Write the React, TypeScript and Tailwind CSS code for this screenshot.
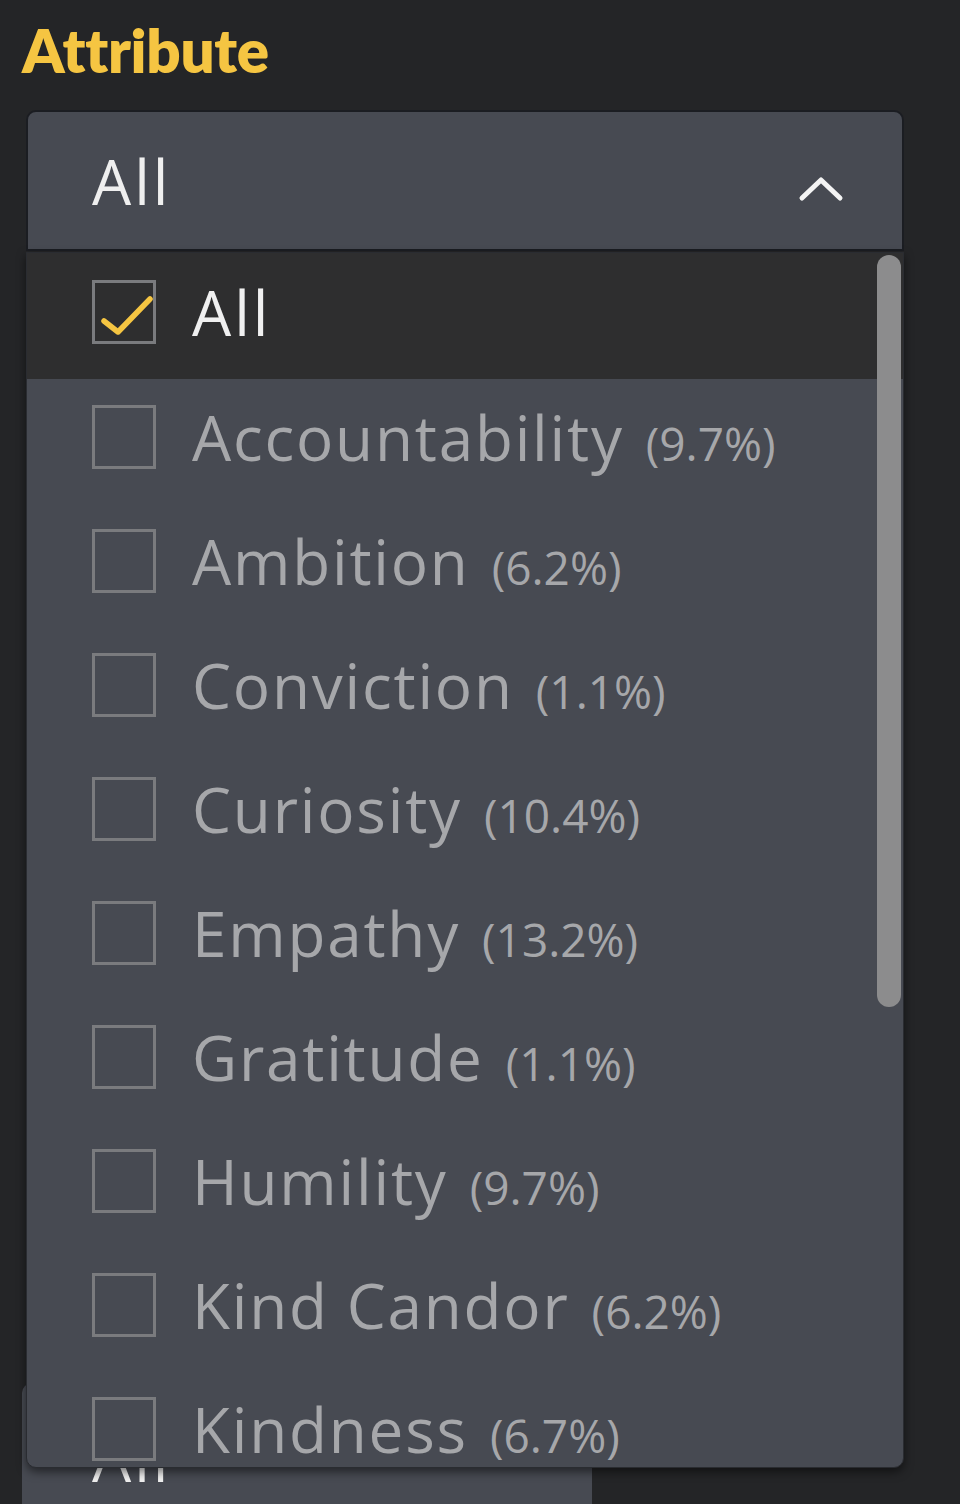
import React from "react";

const items: { label: string; pct: string }[] = [
  { label: "Accountability", pct: "(9.7%)" },
  { label: "Ambition", pct: "(6.2%)" },
  { label: "Conviction", pct: "(1.1%)" },
  { label: "Curiosity", pct: "(10.4%)" },
  { label: "Empathy", pct: "(13.2%)" },
  { label: "Gratitude", pct: "(1.1%)" },
  { label: "Humility", pct: "(9.7%)" },
  { label: "Kind Candor", pct: "(6.2%)" },
  { label: "Kindness", pct: "(6.7%)" },
];

function Checkbox({ checked }: { checked?: boolean }) {
  return (
    <div className="relative w-[64px] h-[64px] shrink-0 border-[3px] border-[#7a7b7e]">
      {checked && (
        <svg className="absolute left-[-3px] top-[-3px]" width="64" height="64" viewBox="0 0 64 64" fill="none">
          <path d="M12 41 L26 52 L58 19" stroke="#f5c542" strokeWidth="5.5" strokeLinecap="round" strokeLinejoin="round" />
        </svg>
      )}
    </div>
  );
}

export default function App() {
  return (
    <div
      className="w-[960px] h-[1504px] bg-[#242527] overflow-hidden relative"
      style={{ fontFamily: "'Open Sans', Lato, sans-serif" }}
    >
      <div className="pt-[14px] pl-[22px]">
        <h1
          className="text-[60px] leading-[72px] font-extrabold text-[#f5c542] tracking-[-0.3px]"
          style={{ fontFamily: "Lato, sans-serif" }}
        >
          Attribute
        </h1>
      </div>
      <div className="relative mt-[24px] ml-[26px] w-[878px]">
        <div className="h-[141px] bg-[#474a52] border-2 border-[#1b1d22] rounded-t-[10px] flex items-center justify-between pl-[64px] pr-[58px]">
          <span className="text-[62px] text-[#efefef] leading-none tracking-[3px]">All</span>
          <svg className="mt-[14px]" width="46" height="28" viewBox="0 0 46 28" fill="none">
            <path d="M4 24 L23 6 L42 24" stroke="#f4f4f4" strokeWidth="5" strokeLinecap="round" strokeLinejoin="round" />
          </svg>
        </div>
        <div className="absolute left-0 top-[142px] w-[878px] h-[1216px] bg-[#474a52] rounded-b-[10px] overflow-hidden shadow-[0_4px_10px_rgba(0,0,0,0.5)] border border-[#2a2c31] z-10">
          <div className="h-[126px] bg-[#2e2e2f] flex items-center pl-[65px] gap-[36px] pb-[8px]">
            <Checkbox checked />
            <span className="text-[62px] text-[#f0f0f0] leading-none tracking-[3px]">All</span>
          </div>
          {items.map((it) => (
            <div key={it.label} className="h-[124px] flex items-center pl-[65px] gap-[36px] pb-[8px]">
              <Checkbox />
              <div className="flex items-baseline gap-[22px]">
                <span className="text-[62px] text-[#a6a7aa] leading-none tracking-[1.8px]">{it.label}</span>
                <span className="text-[46px] text-[#a6a7aa] leading-none">{it.pct}</span>
              </div>
            </div>
          ))}
          <div className="absolute right-[2px] top-[2px] w-[24px] h-[752px] rounded-full bg-[#8c8c8d]" />
        </div>
      </div>
      <div className="mt-[1132px] ml-[22px] w-[570px] h-[141px] bg-[#474a52] rounded-t-[10px] flex items-center pl-[70px] pt-[8px]">
        <span className="text-[62px] text-[#efefef] leading-none tracking-[3px]">All</span>
      </div>
    </div>
  );
}
